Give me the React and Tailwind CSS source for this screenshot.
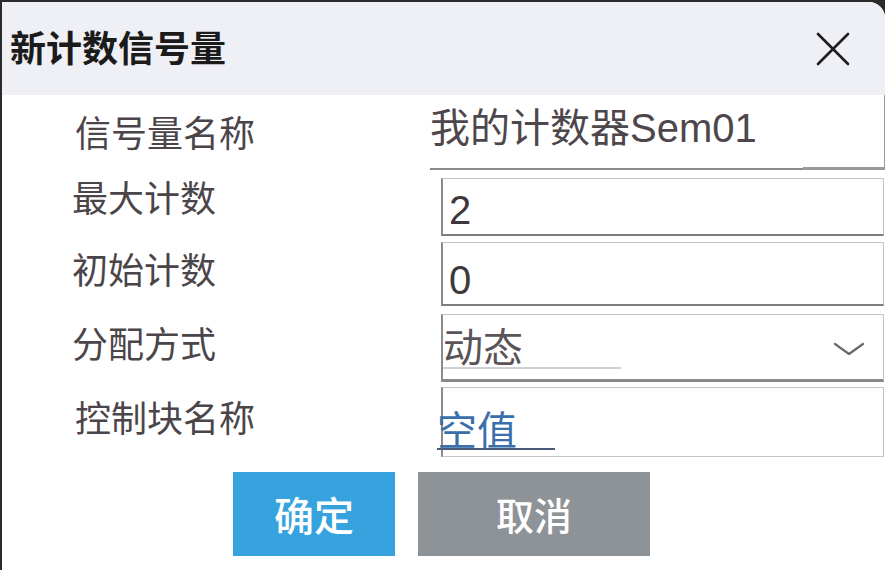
const cjk = { fontFamily: '"Noto Sans CJK SC", "Liberation Sans", sans-serif' };

function Label({ children, className = "" }) {
  return (
    <div className={`w-[439px] shrink-0 pl-[70px] text-[36px] leading-none text-[#4b4549] ${className}`}>
      {children}
    </div>
  );
}

function BoxField({ value, className = "" }) {
  return (
    <div
      className={`flex-1 mr-[1px] flex items-end pl-[6px] pb-[4px] border border-[#c4c4c6] border-l-2 border-l-[#8c8c8e] border-b-2 border-b-[#7d7d80] bg-white ${className}`}
    >
      <span className="text-[40px] leading-none text-[#3d383b]" style={{ fontFamily: '"Liberation Sans", sans-serif' }}>
        {value}
      </span>
    </div>
  );
}

function CloseIcon() {
  return (
    <svg width="34" height="34" viewBox="0 0 34 34" fill="none">
      <path d="M2 2 L32 32 M32 2 L2 32" stroke="#1e1e1e" strokeWidth="2.6" strokeLinecap="round" />
    </svg>
  );
}

function Chevron() {
  return (
    <svg width="32" height="16" viewBox="0 0 32 16" fill="none">
      <path d="M2 3 L16 13 L30 3" stroke="#6a6a6c" strokeWidth="2.2" strokeLinecap="round" strokeLinejoin="round" />
    </svg>
  );
}

export default function App() {
  return (
    <div className="w-[885px] h-[570px] bg-[#2b2b2b] pt-[2px] pl-[2px]" style={cjk}>
      <div className="h-full w-full bg-white rounded-tr-[16px] overflow-hidden flex flex-col">
        {/* title bar */}
        <div className="h-[93px] shrink-0 bg-[#eff0f6] flex items-center justify-between pl-[8px] pr-[35px]">
          <span className="text-[36px] font-bold text-[#1b1b1b] leading-none -mt-[6px]">新计数信号量</span>
          <CloseIcon />
        </div>

        {/* form */}
        <div className="flex flex-col">
          <div className="h-[75px] flex items-center">
            <Label className="pl-[73px] -mt-[4px]">信号量名称</Label>
            <div className="flex-1 h-full flex items-end -ml-[11px]">
              <div className="flex-1 h-[72px] flex items-center border-b-2 border-[#8a8a8c]">
                <span className="text-[40px] leading-none text-[#4d474b] pb-[14px]">
                  我的计数器<span style={{ fontFamily: '"Liberation Sans", sans-serif' }}>Sem01</span>
                </span>
              </div>
              <div className="w-[82px] h-[75px] border-r border-b-[3px] border-[#9a9a9c]" />
            </div>
          </div>

          <div className="h-[65px] flex items-center pt-[8px]">
            <Label className="-mt-[22px]">最大计数</Label>
            <BoxField value="2" className="h-[58px]" />
          </div>

          <div className="h-[72px] flex items-center pt-[6px]">
            <Label className="-mt-[12px]">初始计数</Label>
            <BoxField value="0" className="h-[64px]" />
          </div>

          <div className="h-[75px] flex items-center pt-[6px]">
            <Label className="pl-[68px] -mt-[12px]">分配方式</Label>
            <div className="flex-1 mr-[1px] h-[68px] flex items-center justify-between border border-[#c4c4c6] border-l-2 border-l-[#8c8c8e] border-b-[3px] border-b-[#8a8a8c] bg-white">
              <span className="text-[40px] leading-none text-[#5a5458] pb-[2px] border-b-2 border-[#cfd1d8] w-[178px]">动态</span>
              <div className="pr-[18px] pt-[4px]">
                <Chevron />
              </div>
            </div>
          </div>

          <div className="h-[75px] flex items-center pt-[4px]">
            <Label className="pl-[73px] -mt-[12px]">控制块名称</Label>
            <div className="flex-1 mr-[1px] h-[70px] flex items-end border border-[#c4c4c6] border-l-2 border-l-[#8c8c8e] bg-white">
              <span className="-ml-[6px] mb-[6px] text-[40px] leading-none text-[#3a6fac] border-b-2 border-[#4a5a78] w-[118px]">
                空值
              </span>
            </div>
          </div>
        </div>

        {/* buttons */}
        <div className="flex justify-center gap-[23px] mt-[15px] pr-[4px]">
          <button className="w-[162px] h-[84px] bg-[#36a3de] text-white text-[40px] font-medium leading-none" style={cjk}>
            确定
          </button>
          <button className="w-[232px] h-[84px] bg-[#8e9397] text-white text-[38px] font-medium leading-none" style={cjk}>
            取消
          </button>
        </div>
      </div>
    </div>
  );
}
